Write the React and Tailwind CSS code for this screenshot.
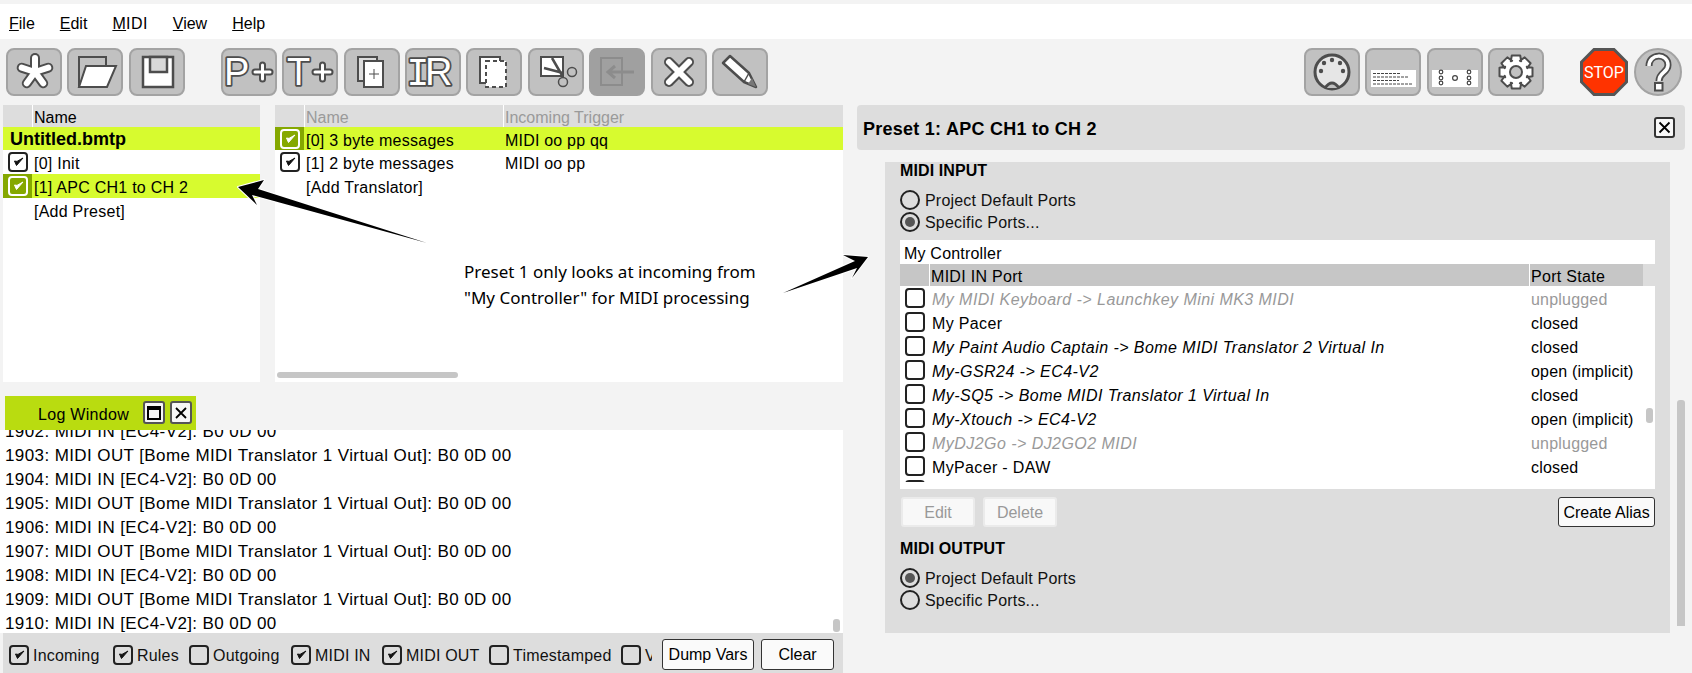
import React from 'react';

const DARK = '#4d4d4d';
const FONT = "font-['Liberation_Sans',Arial,sans-serif]";

const Check = ({ checked = false, selected = false }) => (
    <span className={`w-[20px] h-[20px] shrink-0 rounded-[4px] border-2 flex items-center justify-center ${selected ? 'border-white' : 'border-[#222222]'}`}>
        {checked && (
            <svg width="12" height="12" viewBox="0 0 12 12">
                <path d="M2.5 5 L4.5 9.5 L11 2 L5 5.4 Z" fill={selected ? '#ffffff' : '#111111'} stroke={selected ? '#ffffff' : '#111111'} strokeWidth="1" />
            </svg>
        )}
    </span>
);

const Radio = ({ on, label }) => (
    <div className="flex items-center h-[22px] text-[16px] text-[#111111]">
        <span className="w-[20px] h-[20px] rounded-full border-2 border-[#222222] flex items-center justify-center">
            {on && <span className="w-[10px] h-[10px] rounded-full bg-[#555555]"></span>}
        </span>
        <span className="ml-[5px] pt-[2px] tracking-[0.2px]">{label}</span>
    </div>
);

const ToolButton = ({ children, disabled, className = '' }) => (
    <div className={`w-[56px] h-[48px] shrink-0 rounded-[8px] border-2 ${disabled ? 'bg-[#a0a0a0] border-[#a0a0a0]' : 'bg-[#c1c1c1] border-[#a3a3a3]'} ${className}`}>
        <svg width="52" height="44" viewBox="2 2 52 44" fill="none">{children}</svg>
    </div>
);

const Twice = ({ children, outer = 10, inner = 6 }) => (
    <>
        <g stroke={DARK} strokeWidth={outer} strokeLinecap="round">{children}</g>
        <g stroke="#ffffff" strokeWidth={inner} strokeLinecap="round">{children}</g>
    </>
);

const starArms = [-90, -18, 54, 126, 198].map(a => {
    const r = (a * Math.PI) / 180;
    return <line key={a} x1="29" y1="24" x2={29 + 14 * Math.cos(r)} y2={24 + 14 * Math.sin(r)} />;
});

const OutlineText = ({ x, y, size, family = 'Liberation Sans', children }) => (
    <text x={x} y={y} fontFamily={family} fontSize={size} fill="#ffffff" stroke={DARK} strokeWidth="3.5" strokeLinejoin="round" style={{ paintOrder: 'stroke' }}>
        {children}
    </text>
);

const gearPath = () => {
    const pts = [];
    for (let i = 0; i < 8; i++) {
        const a = (i * Math.PI) / 4 - Math.PI / 2;
        const step = Math.PI / 4;
        [[-0.36, 12], [-0.2, 17], [0.2, 17], [0.36, 12]].forEach(([f, r]) => {
            pts.push(`${(28 + r * Math.cos(a + f * step * 1.6)).toFixed(1)},${(24 + r * Math.sin(a + f * step * 1.6)).toFixed(1)}`);
        });
    }
    return pts.join(' ');
};

const Toolbar = () => (
    <div className="flex items-start pl-[6px] h-[66px] pt-[9px] shrink-0">
        <div className="flex gap-[5.4px]">
            <ToolButton><Twice>{starArms}</Twice></ToolButton>
            <ToolButton>
                <path d="M12 39 V9 H39 V18" stroke={DARK} strokeWidth="2" />
                <path d="M19 18 H49 L40 39 H12 Z" fill="#ffffff" stroke={DARK} strokeWidth="2" />
            </ToolButton>
            <ToolButton>
                <rect x="14" y="9" width="30" height="30" fill="#ffffff" stroke={DARK} strokeWidth="2.5" />
                <rect x="21" y="9" width="17" height="15" fill="#d8d8d8" stroke={DARK} strokeWidth="2.5" />
            </ToolButton>
        </div>
        <div className="flex gap-[5.4px] ml-[36px]">
            <ToolButton>
                <OutlineText x="3" y="37" size="38">P</OutlineText>
                <Twice outer={7} inner={3}><line x1="34" y1="24" x2="49" y2="24" /><line x1="41.5" y1="17" x2="41.5" y2="31" /></Twice>
            </ToolButton>
            <ToolButton>
                <OutlineText x="5" y="37" size="38">T</OutlineText>
                <Twice outer={7} inner={3}><line x1="33" y1="24" x2="48" y2="24" /><line x1="40.5" y1="17" x2="40.5" y2="31" /></Twice>
            </ToolButton>
            <ToolButton>
                <rect x="14" y="9" width="19" height="24" fill="#dddddd" stroke={DARK} strokeWidth="2" />
                <rect x="20" y="13" width="19" height="26" fill="#ffffff" stroke={DARK} strokeWidth="2" />
                <path d="M25 26 H35 M30 21 V31" stroke={DARK} strokeWidth="1" />
            </ToolButton>
            <ToolButton>
                <OutlineText x="1.5" y="37" size="38" family="Liberation Mono">I</OutlineText>
                <OutlineText x="20" y="37" size="38">R</OutlineText>
            </ToolButton>
            <ToolButton>
                <path d="M20 35 H14 V9 H34 V13" fill="#ffffff" stroke={DARK} strokeWidth="2" />
                <rect x="20" y="13" width="20" height="26" fill="#ffffff" stroke={DARK} strokeWidth="2" strokeDasharray="4 3" />
            </ToolButton>
            <ToolButton>
                <rect x="13" y="9" width="22" height="19" fill="#ffffff" stroke={DARK} strokeWidth="2" />
                <path d="M24 10 L35 29 M16 20 L35 25" stroke={DARK} strokeWidth="2.5" />
                <circle cx="44" cy="24" r="4.5" fill="#c1c1c1" stroke={DARK} strokeWidth="1.5" />
                <circle cx="35" cy="34" r="4.5" fill="#c1c1c1" stroke={DARK} strokeWidth="1.5" />
            </ToolButton>
            <ToolButton disabled>
                <rect x="12" y="10" width="21" height="27" stroke="#8c8c8c" strokeWidth="2" />
                <path d="M45 24 H20 M26 18 L19 24 L26 30" stroke="#8c8c8c" strokeWidth="3" />
            </ToolButton>
            <ToolButton><Twice><line x1="18" y1="14" x2="38" y2="34" /><line x1="38" y1="14" x2="18" y2="34" /></Twice></ToolButton>
            <ToolButton>
                <path d="M18 8 L11 15 L32 34 L44 39 L37 25 Z" fill="#ffffff" stroke={DARK} strokeWidth="2.5" strokeLinejoin="round" />
                <path d="M32 34 L37 25" stroke={DARK} strokeWidth="1.5" />
                <path d="M36 36 L44 39 L40 30 Z" fill="#777777" />
            </ToolButton>
        </div>
        <div className="flex gap-[5.4px] ml-auto">
            <ToolButton>
                <circle cx="28" cy="24" r="17" fill="#e6e6e6" stroke={DARK} strokeWidth="3" />
                <path d="M21 40 Q28 30 35 40" fill="#c1c1c1" stroke={DARK} strokeWidth="3" />
                {[[17, 23], [20, 15], [28, 12], [36, 15], [39, 23]].map(([cx, cy]) => (
                    <circle key={cx} cx={cx} cy={cy} r="2.2" fill={DARK} />
                ))}
            </ToolButton>
            <ToolButton>
                <rect x="6" y="22" width="45" height="17" fill="#ffffff" />
                <path d="M8 25.5 H36 M8 29 H44 M8 32.5 H34 M8 36 H48" stroke="#444444" strokeWidth="1" strokeDasharray="3 1" />
            </ToolButton>
            <ToolButton>
                <rect x="5" y="22" width="46" height="17" fill="#ffffff" />
                {[[14, 24], [14, 30], [14, 35], [42, 24], [42, 30], [42, 35]].map(([cx, cy]) => (
                    <circle key={`${cx}-${cy}`} cx={cx} cy={cy} r="1.8" fill="none" stroke="#444444" strokeWidth="1.2" />
                ))}
                <circle cx="28" cy="30" r="2.4" fill="none" stroke="#444444" strokeWidth="1.2" />
            </ToolButton>
            <ToolButton>
                <polygon points={gearPath()} fill="#ffffff" stroke={DARK} strokeWidth="2" strokeLinejoin="round" />
                <circle cx="28" cy="24" r="6" fill="#c1c1c1" stroke={DARK} strokeWidth="2" />
            </ToolButton>
        </div>
        <div className="ml-[36px] mr-[10px] flex gap-[6px]">
            <svg width="48" height="48" viewBox="0 0 48 48">
                <polygon points="14,1.5 34,1.5 46.5,14 46.5,34 34,46.5 14,46.5 1.5,34 1.5,14" fill="#ff3300" stroke="#555555" strokeWidth="3" />
                <text x="24" y="29.5" textAnchor="middle" fontFamily="Roboto" fontSize="16" fill="#ffffff">STOP</text>
            </svg>
            <div className="w-[48px] h-[48px] rounded-full bg-[#c1c1c1] border-2 border-[#a3a3a3]">
                <svg width="44" height="44" viewBox="0 0 44 44" fill="none">
                    <path d="M13 16 C13 3 32 3 32 15 C32 23 23 22 23 31" stroke={DARK} strokeWidth="7" />
                    <path d="M13 16 C13 3 32 3 32 15 C32 23 23 22 23 31" stroke="#ffffff" strokeWidth="3.5" />
                    <rect x="19" y="33" width="7.5" height="7.5" fill="#ffffff" stroke={DARK} strokeWidth="2" />
                </svg>
            </div>
        </div>
    </div>
);

const HeadCell = ({ className = '', children }) => (
    <div className={`bg-[#dddddd] h-full flex items-center pt-[3px] ${className}`}>{children}</div>
);

const presets = [
    { label: '[0] Init', checked: true },
    { label: '[1] APC CH1 to CH 2', checked: true, selected: true },
    { label: '[Add Preset]' },
];

const translators = [
    { label: '[0] 3 byte messages', trigger: 'MIDI oo pp qq', checked: true, selected: true },
    { label: '[1] 2 byte messages', trigger: 'MIDI oo pp', checked: true },
    { label: '[Add Translator]' },
];

const ListRow = ({ row }) => (
    <div className={`flex items-center h-[24px] ${row.selected ? 'bg-[#d7fb2f]' : ''}`}>
        <div className={`w-[29px] h-full flex items-center justify-center shrink-0 ${row.selected ? 'bg-[#85a800]' : ''}`}>
            {row.checked && <Check checked selected={row.selected} />}
        </div>
        <span className="ml-[2px] pt-[4px] w-[199px] shrink-0 whitespace-nowrap tracking-[0.25px]">{row.label}</span>
        {row.trigger && <span className="pt-[4px] whitespace-nowrap tracking-[0.2px]">{row.trigger}</span>}
    </div>
);

const logLines = [
    '1902: MIDI IN [EC4-V2]: B0 0D 00',
    '1903: MIDI OUT [Bome MIDI Translator 1 Virtual Out]: B0 0D 00',
    '1904: MIDI IN [EC4-V2]: B0 0D 00',
    '1905: MIDI OUT [Bome MIDI Translator 1 Virtual Out]: B0 0D 00',
    '1906: MIDI IN [EC4-V2]: B0 0D 00',
    '1907: MIDI OUT [Bome MIDI Translator 1 Virtual Out]: B0 0D 00',
    '1908: MIDI IN [EC4-V2]: B0 0D 00',
    '1909: MIDI OUT [Bome MIDI Translator 1 Virtual Out]: B0 0D 00',
    '1910: MIDI IN [EC4-V2]: B0 0D 00',
];

const filters = [
    { label: 'Incoming', on: true, w: 'w-[104px]' },
    { label: 'Rules', on: true, w: 'w-[76px]' },
    { label: 'Outgoing', w: 'w-[102px]' },
    { label: 'MIDI IN', on: true, w: 'w-[91px]' },
    { label: 'MIDI OUT', on: true, w: 'w-[107px]' },
    { label: 'Timestamped', w: 'w-[132px]' },
    { label: 'V', w: 'w-[31px] overflow-hidden' },
];

const ports = [
    { name: 'My MIDI Keyboard -> Launchkey Mini MK3 MIDI', state: 'unplugged', alias: true, off: true },
    { name: 'My Pacer', state: 'closed' },
    { name: 'My Paint Audio Captain -> Bome MIDI Translator 2 Virtual In', state: 'closed', alias: true },
    { name: 'My-GSR24 -> EC4-V2', state: 'open (implicit)', alias: true },
    { name: 'My-SQ5 -> Bome MIDI Translator 1 Virtual In', state: 'closed', alias: true },
    { name: 'My-Xtouch -> EC4-V2', state: 'open (implicit)', alias: true },
    { name: 'MyDJ2Go -> DJ2GO2 MIDI', state: 'unplugged', alias: true, off: true },
    { name: 'MyPacer - DAW', state: 'closed' },
    { name: '', state: '' },
];

const FormButton = ({ children, className = '' }) => (
    <button className={`h-[30px] rounded-[3px] text-[16px] flex items-center justify-center ${className}`}>{children}</button>
);

const MiniButton = ({ children }) => (
    <div className="w-[22px] h-[23px] rounded-[3px] border-2 border-[#555555] bg-[#f6f6f6] flex items-center justify-center">
        {children}
    </div>
);

export default function App() {
    return (
        <div className={`relative w-[1692px] h-[673px] overflow-hidden bg-[#f3f3f3] text-[16px] text-black ${FONT}`}>
            {/* Menu */}
            <div className="mt-[4px] h-[35px] bg-white flex items-center pl-[9px] gap-[25px] pt-[4px]">
                <span><span className="underline">F</span>ile</span>
                <span><span className="underline">E</span>dit</span>
                <span className="tracking-[0.4px]"><span className="underline">M</span>IDI</span>
                <span><span className="underline">V</span>iew</span>
                <span><span className="underline">H</span>elp</span>
            </div>

            <Toolbar />

            <div className="flex h-[568px]">
                {/* Left column */}
                <div className="w-[843px] shrink-0 flex flex-col">
                    <div className="flex h-[277px] pl-[3px] gap-[15px] shrink-0">
                        <div className="w-[257px] bg-white">
                            <div className="flex h-[22px]">
                                <HeadCell className="w-[29px]" />
                                <HeadCell className="ml-px flex-1 pl-[1px]">Name</HeadCell>
                            </div>
                            <div className="h-[23px] bg-[#d7fb2f] flex items-center pl-[7px] pt-[2px] text-[18px] font-bold">Untitled.bmtp</div>
                            {presets.map(row => <ListRow key={row.label} row={row} />)}
                        </div>
                        <div className="flex-1 bg-white relative">
                            <div className="flex h-[22px] text-[#9a9a9a]">
                                <HeadCell className="w-[29px]" />
                                <HeadCell className="ml-px w-[198px] pl-[1px]">Name</HeadCell>
                                <HeadCell className="ml-px flex-1 pl-[1px]">Incoming Trigger</HeadCell>
                            </div>
                            {translators.map((row, i) => (
                                <div key={row.label} className={i === 0 ? 'h-[23px] overflow-hidden' : ''}>
                                    <ListRow row={row} />
                                </div>
                            ))}
                            <div className="absolute left-[2px] bottom-[4px] w-[181px] h-[6px] rounded-[3px] bg-[#c6c6c6]"></div>
                        </div>
                    </div>

                    <div className="h-[14px] shrink-0"></div>
                    <div className="h-[34px] shrink-0 pl-[5px]">
                        <div className="w-[191px] h-full bg-[#b9dc10] flex items-start pt-[5px]">
                            <span className="ml-[33px] mt-[2px] w-[105px] tracking-[0.3px]">Log Window</span>
                            <div className="flex gap-[5px]">
                                <MiniButton><span className="w-[14px] h-[14px] border-2 border-black border-t-[4px]"></span></MiniButton>
                                <MiniButton>
                                    <svg width="14" height="14" viewBox="0 0 14 14"><path d="M2 2 L12 12 M12 2 L2 12" stroke="#000000" strokeWidth="1.8" /></svg>
                                </MiniButton>
                            </div>
                        </div>
                    </div>

                    {/* Log */}
                    <div className="relative h-[203px] shrink-0 bg-white overflow-hidden pl-[5px]">
                        <div className="-mt-[10px]">
                            {logLines.map(line => (
                                <div key={line} className="h-[24px] leading-[24px] text-[17px] tracking-[0.4px] whitespace-nowrap">{line}</div>
                            ))}
                        </div>
                        <div className="absolute left-[833px] top-[189px] w-[7px] h-[13px] rounded-[3px] bg-[#c6c6c6]"></div>
                    </div>

                    <div className="h-[40px] ml-[3px] pt-[3px] shrink-0 bg-[#dddddd] flex items-center pl-[6px] overflow-hidden">
                        {filters.map(f => (
                            <div key={f.label} className={`flex items-center shrink-0 ${f.w}`}>
                                <Check checked={f.on} />
                                <span className="ml-[4px] pt-[2px] text-[#111111] tracking-[0.2px] whitespace-nowrap">{f.label}</span>
                            </div>
                        ))}
                        <FormButton className="w-[92px] h-[31px] ml-[10px] border border-[#333333] bg-[#fafafa]">Dump Vars</FormButton>
                        <FormButton className="w-[73px] h-[31px] ml-[7px] border border-[#333333] bg-[#fafafa]">Clear</FormButton>
                    </div>
                </div>

                {/* Right column */}
                <div className="ml-[14px] w-[828px] shrink-0 flex flex-col">
                    <div className="h-[45px] shrink-0 rounded-[4px] bg-[#dddddd] flex items-center pl-[6px] pr-[10px] justify-between">
                        <span className="pt-[4px] text-[18px] font-bold tracking-[0.25px]">Preset 1: APC CH1 to CH 2</span>
                        <span className="w-[21px] h-[21px] rounded-[3px] border-2 border-[#333333] bg-[#f8f8f8] flex items-center justify-center">
                            <svg width="13" height="13" viewBox="0 0 13 13"><path d="M1.5 1.5 L11.5 11.5 M11.5 1.5 L1.5 11.5" stroke="#000000" strokeWidth="1.8" /></svg>
                        </span>
                    </div>

                    <div className="flex h-[471px] mt-[12px]">
                        <div className="ml-[28px] w-[786px] h-full bg-[#dddddd] pl-[15px] pr-[15px]">
                            <div className="h-[16px] leading-[18px] font-bold tracking-[0.1px]">MIDI INPUT</div>
                            <div className="mt-[11px]"><Radio label="Project Default Ports" /></div>
                            <Radio on label="Specific Ports..." />

                            <div className="mt-[7px] bg-white h-[249px]">
                                <div className="h-[24px] pl-[4px] pt-[4px] flex items-center tracking-[0.2px]">My Controller</div>
                                <div className="flex h-[22px] bg-[#c6c6c6] tracking-[0.3px]">
                                    <div className="w-[29px]"></div>
                                    <div className="w-[600px] border-l border-white pl-[1px] pt-[3px] flex items-center">MIDI IN Port</div>
                                    <div className="w-[112px] border-l border-white pl-[1px] pt-[3px] flex items-center">Port State</div>
                                    <div className="ml-[2px] flex-1 bg-[#dddddd]"></div>
                                </div>
                                <div className="relative h-[196px] overflow-hidden">
                                    {ports.map((p, i) => (
                                        <div key={i} className={`flex items-center h-[24px] ${p.off ? 'text-[#999999]' : 'text-black'}`}>
                                            <div className="w-[29px] pl-[5px] shrink-0"><Check /></div>
                                            <span className={`w-[599px] pl-[3px] pt-[4px] shrink-0 whitespace-nowrap ${p.alias ? 'italic tracking-[0.45px]' : 'tracking-[0.35px]'}`}>{p.name}</span>
                                            <span className="pl-[3px] pt-[4px] whitespace-nowrap tracking-[0.2px]">{p.state}</span>
                                        </div>
                                    ))}
                                    <div className="absolute left-[746px] top-[122px] w-[7px] h-[15px] rounded-[3px] bg-[#c6c6c6]"></div>
                                </div>
                            </div>

                            <div className="mt-[8px] flex">
                                <FormButton className="w-[74px] ml-[1px] pt-[2px] border-2 border-[#ebebeb] bg-[#f8f8f8] text-[#999999]">Edit</FormButton>
                                <FormButton className="w-[74px] ml-[8px] pt-[2px] border-2 border-[#ebebeb] bg-[#f8f8f8] text-[#999999]">Delete</FormButton>
                                <FormButton className="w-[97px] ml-auto pt-[2px] border border-[#333333] bg-[#fafafa]">Create Alias</FormButton>
                            </div>

                            <div className="mt-[13px] h-[16px] leading-[18px] font-bold tracking-[0.1px]">MIDI OUTPUT</div>
                            <div className="mt-[11px]"><Radio on label="Project Default Ports" /></div>
                            <Radio label="Specific Ports..." />
                        </div>
                        <div className="ml-[7px] mt-[238px] w-[8px] h-[226px] rounded-t-[3px] bg-[#c6c6c6]"></div>
                    </div>
                </div>
            </div>

            {/* Annotation over the translator list */}
            <div className="absolute left-[464px] top-[259px] text-[17px] leading-[26px] text-black font-['Noto_Sans',sans-serif]">
                <div>Preset 1 only looks at incoming from</div>
                <div>"My Controller" for MIDI processing</div>
            </div>
            <svg className="absolute left-0 top-0 pointer-events-none" width="1692" height="673" viewBox="0 0 1692 673">
                <polygon points="238,187 264,180 258,189 427,243 252,195 257,205" fill="#000000" stroke="#ffffff" strokeWidth="2" strokeLinejoin="round" style={{ paintOrder: 'stroke' }} />
                <polygon points="868,257 843,255 855,261 783,293 857,268 852,278" fill="#000000" stroke="#ffffff" strokeWidth="2" strokeLinejoin="round" style={{ paintOrder: 'stroke' }} />
            </svg>
        </div>
    );
}
